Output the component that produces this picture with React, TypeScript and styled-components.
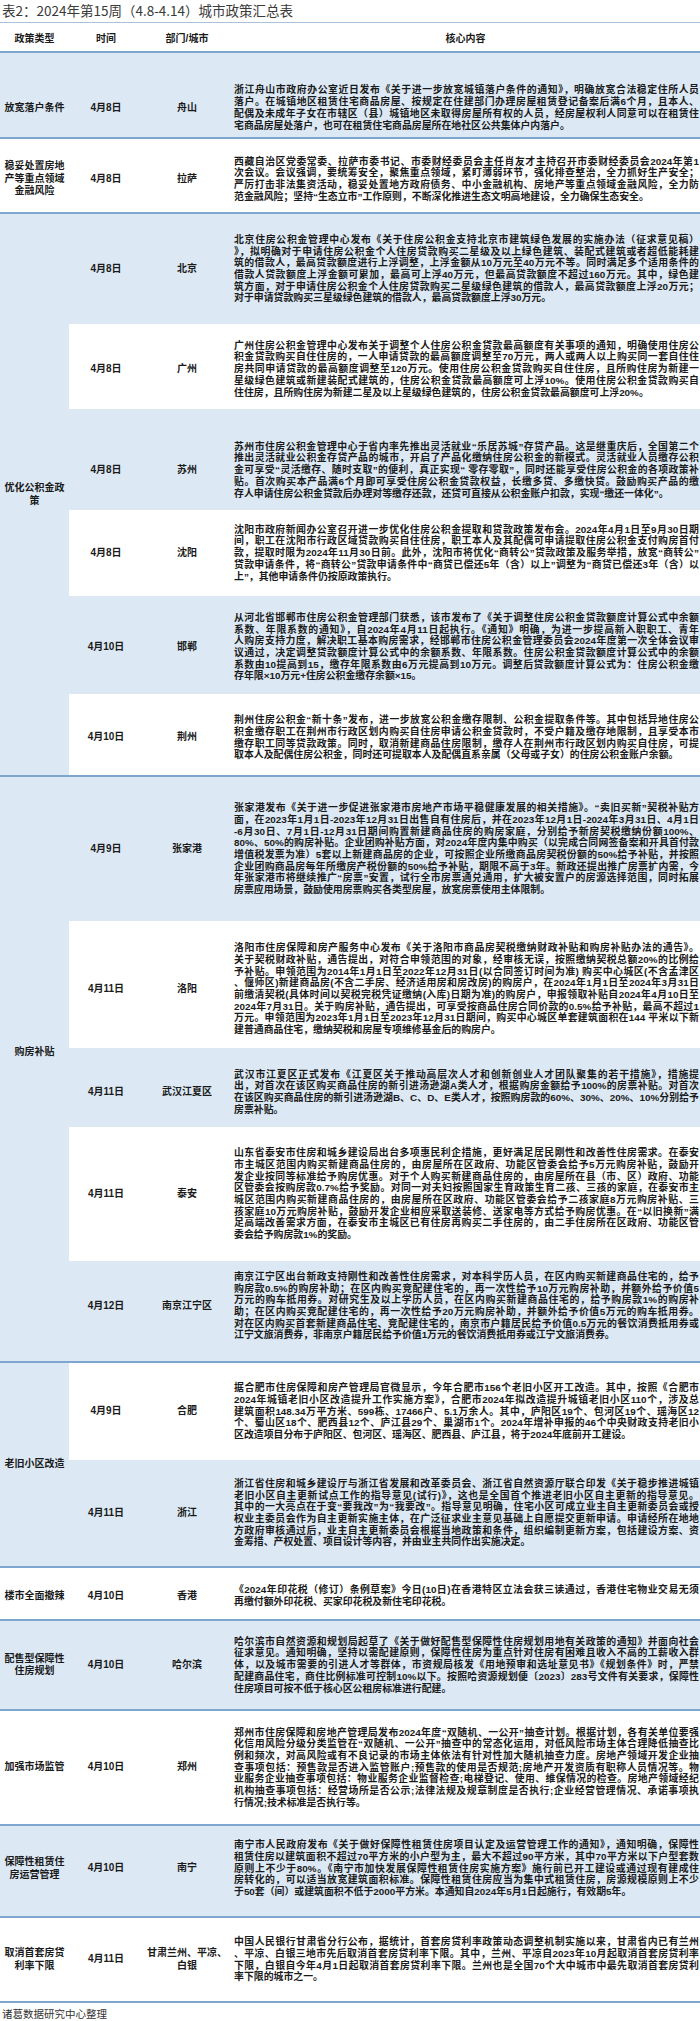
import styled, { createGlobalStyle } from "styled-components";

const GlobalStyle = createGlobalStyle`
  html, body {
    margin: 0;
    padding: 0;
    background: #fff;
  }
  body {
    font-family: "Liberation Sans", "Noto Sans CJK SC", sans-serif;
    color: #1a1a1a;
  }
`;

type PolicyRow = {
  date: string;
  city: string[];
  h: number;
  dy: number;
  lines: string[];
};

type PolicyGroup = {
  type: string[];
  dy?: number;
  rows: PolicyRow[];
};

const groups: PolicyGroup[] = [
  {
    type: ["放宽落户条件"],
    rows: [
      {
        date: "4月8日",
        city: ["舟山"],
        h: 86,
        dy: 12.8,
        lines: [
          "浙江舟山市政府办公室近日发布《关于进一步放宽城镇落户条件的通知》，明确放宽合法稳定住所人员",
          "落户。在城镇地区租赁住宅商品房屋、按规定在住建部门办理房屋租赁登记备案后满6个月，且本人、",
          "配偶及未成年子女在市辖区（县）城镇地区未取得房屋所有权的人员，经房屋权利人同意可以在租赁住",
          "宅商品房屋处落户，也可在租赁住宅商品房屋所在地社区公共集体户内落户。",
        ],
      },
    ],
  },
  {
    type: ["稳妥处置房地", "产等重点领域", "金融风险"],
    rows: [
      {
        date: "4月8日",
        city: ["拉萨"],
        h: 75,
        dy: 3.5,
        lines: [
          "西藏自治区党委常委、拉萨市委书记、市委财经委员会主任肖友才主持召开市委财经委员会2024年第1",
          "次会议。会议强调，要统筹安全，聚焦重点领域，紧盯薄弱环节，强化排查整治，全力抓好生产安全；",
          "严厉打击非法集资活动，稳妥处置地方政府债务、中小金融机构、房地产等重点领域金融风险，全力防",
          "范金融风险；坚持“生态立市”工作原则，不断深化推进生态文明高地建设，全力确保生态安全。",
        ],
      },
    ],
  },
  {
    type: ["优化公积金政", "策"],
    rows: [
      {
        date: "4月8日",
        city: ["北京"],
        h: 110,
        dy: 0,
        lines: [
          "北京住房公积金管理中心发布《关于住房公积金支持北京市建筑绿色发展的实施办法（征求意见稿）",
          "》，拟明确对于申请住房公积金个人住房贷款购买二星级及以上绿色建筑、装配式建筑或者超低能耗建",
          "筑的借款人，最高贷款额度进行上浮调整，上浮金额从10万元至40万元不等。同时满足多个适用条件的",
          "借款人贷款额度上浮金额可累加，最高可上浮40万元，但最高贷款额度不超过160万元。其中，绿色建",
          "筑方面，对于申请住房公积金个人住房贷款购买二星级绿色建筑的借款人，最高贷款额度上浮20万元；",
          "对于申请贷款购买三星级绿色建筑的借款人，最高贷款额度上浮30万元。",
        ],
      },
      {
        date: "4月8日",
        city: ["广州"],
        h: 85,
        dy: 2.5,
        lines: [
          "广州住房公积金管理中心发布关于调整个人住房公积金贷款最高额度有关事项的通知，明确使用住房公",
          "积金贷款购买自住住房的，一人申请贷款的最高额度调整至70万元，两人或两人以上购买同一套自住住",
          "房共同申请贷款的最高额度调整至120万元。使用住房公积金贷款购买自住住房，且所购住房为新建一",
          "星级绿色建筑或新建装配式建筑的，住房公积金贷款最高额度可上浮10%。使用住房公积金贷款购买自",
          "住住房，且所购住房为新建二星及以上星级绿色建筑的，住房公积金贷款最高额度可上浮20%。",
        ],
      },
      {
        date: "4月8日",
        city: ["苏州"],
        h: 101,
        dy: 10.5,
        lines: [
          "苏州市住房公积金管理中心于省内率先推出灵活就业“乐居苏城”存贷产品。这是继重庆后，全国第二个",
          "推出灵活就业公积金存贷产品的城市，开启了产品化缴纳住房公积金的新模式。灵活就业人员缴存公积",
          "金可享受“灵活缴存、随时支取”的便利，真正实现“ 零存零取”，同时还能享受住房公积金的各项政策补",
          "贴。首次购买本产品满6个月即可享受住房公积金贷款权益，长缴多贷、多缴快贷。鼓励购买产品的缴",
          "存人申请住房公积金贷款后办理对等缴存还款，还贷可直接从公积金账户扣款，实现“缴还一体化”。",
        ],
      },
      {
        date: "4月8日",
        city: ["沈阳"],
        h: 86,
        dy: 0,
        lines: [
          "沈阳市政府新闻办公室召开进一步优化住房公积金提取和贷款政策发布会。2024年4月1日至9月30日期",
          "间，职工在沈阳市行政区域贷款购买自住住房，职工本人及其配偶可申请提取住房公积金支付购房首付",
          "款，提取时限为2024年11月30日前。此外，沈阳市将优化“商转公”贷款政策及服务举措，放宽“商转公”",
          "贷款申请条件，将“商转公”贷款申请条件中“商贷已偿还5年（含）以上”调整为“商贷已偿还3年（含）以",
          "上”，其他申请条件仍按原政策执行。",
        ],
      },
      {
        date: "4月10日",
        city: ["邯郸"],
        h: 98,
        dy: 2,
        lines: [
          "从河北省邯郸市住房公积金管理部门获悉，该市发布了《关于调整住房公积金贷款额度计算公式中余额",
          "系数、年限系数的通知》，自2024年4月11日起执行。《通知》明确，为进一步提高新入职职工、青年",
          "人购房支持力度，解决职工基本购房需求，经邯郸市住房公积金管理委员会2024年度第一次全体会议审",
          "议通过，决定调整贷款额度计算公式中的余额系数、年限系数。住房公积金贷款额度计算公式中的余额",
          "系数由10提高到15，缴存年限系数由6万元提高到10万元。调整后贷款额度计算公式为：住房公积金缴",
          "存年限×10万元+住房公积金缴存余额×15。",
        ],
      },
      {
        date: "4月10日",
        city: ["荆州"],
        h: 83,
        dy: 3,
        lines: [
          "荆州住房公积金“新十条”发布，进一步放宽公积金缴存限制、公积金提取条件等。其中包括异地住房公",
          "积金缴存职工在荆州市行政区划内购买自住房申请公积金贷款时，不受户籍及缴存地限制，且享受本市",
          "缴存职工同等贷款政策。同时，取消新建商品住房限制，缴存人在荆州市行政区划内购买自住房，可提",
          "取本人及配偶住房公积金，同时还可提取本人及配偶直系亲属（父母或子女）的住房公积金账户余额。",
        ],
      },
    ],
  },
  {
    type: ["购房补贴"],
    dy: -17,
    rows: [
      {
        date: "4月9日",
        city: ["张家港"],
        h: 144,
        dy: 0,
        lines: [
          "张家港发布《关于进一步促进张家港市房地产市场平稳健康发展的相关措施》。“卖旧买新”契税补贴方",
          "面，在2023年1月1日-2023年12月31日出售自有住房后，并在2023年12月1日-2024年3月31日、4月1日",
          "-6月30日、7月1日-12月31日期间购置新建商品住房的购房家庭，分别给予新房契税缴纳份额100%、",
          "80%、50%的购房补贴。企业团购补贴方面，对2024年度内集中购买（以完成合同网签备案和开具首付款",
          "增值税发票为准）5套以上新建商品房的企业，可按照企业所缴商品房契税份额的50%给予补贴，并按照",
          "企业团购商品房每年所缴房产税份额的50%给予补贴，期限不高于3年。新政还提出推广房票扩内需，今",
          "年张家港市将继续推广“房票”安置，试行全市房票通兑通用，扩大被安置户的房源选择范围，同时拓展",
          "房票应用场景，鼓励使用房票购买各类型房屋，放宽房票使用主体限制。",
        ],
      },
      {
        date: "4月11日",
        city: ["洛阳"],
        h: 127,
        dy: 4.5,
        lines: [
          "洛阳市住房保障和房产服务中心发布《关于洛阳市商品房契税缴纳财政补贴和购房补贴办法的通告》。",
          "关于契税财政补贴，通告提出，对符合申领范围的对象，经审核无误，按照缴纳契税总额20%的比例给",
          "予补贴。申领范围为2014年1月1日至2022年12月31日(以合同签订时间为准) 购买中心城区(不含孟津区",
          "、偃师区)新建商品房(不含二手房、经济适用房和房改房)的购房户，在2024年1月1日至2024年3月31日",
          "前缴清契税(具体时间以契税完税凭证缴纳(入库)日期为准)的购房户，申报领取补贴自2024年4月10日至",
          "2024年7月31日。关于购房补贴，通告提出，可享受按商品住房合同价款的0.5%给予补贴，最高不超过1",
          "万元。申领范围为2023年1月1日至2023年12月31日期间，购买中心城区单套建筑面积在144 平米以下新",
          "建普通商品住宅，缴纳契税和房屋专项维修基金后的购房户。",
        ],
      },
      {
        date: "4月11日",
        city: ["武汉江夏区"],
        h: 79,
        dy: 4.5,
        lines: [
          "武汉市江夏区正式发布《江夏区关于推动高层次人才和创新创业人才团队聚集的若干措施》，措施提",
          "出，对首次在该区购买商品住房的新引进汤逊湖A类人才，根据购房金额给予100%的房票补贴。对首次",
          "在该区购买商品住房的新引进汤逊湖B、C、D、E类人才，按照购房款的60%、30%、20%、10%分别给予",
          "房票补贴。",
        ],
      },
      {
        date: "4月11日",
        city: ["泰安"],
        h: 134,
        dy: 0,
        lines: [
          "山东省泰安市住房和城乡建设局出台多项惠民利企措施，更好满足居民刚性和改善性住房需求。在泰安",
          "市主城区范围内购买新建商品住房的，由房屋所在区政府、功能区管委会给予5万元购房补贴，鼓励开",
          "发企业按同等标准给予购房优惠。对于个人购买新建商品住房的，由房屋所在县（市、区）政府、功能",
          "区管委会按购房款0.7%给予奖励。对同一对夫妇按照国家生育政策生育二孩、三孩的家庭，在泰安市主",
          "城区范围内购买新建商品住房的，由房屋所在区政府、功能区管委会给予二孩家庭8万元购房补贴、三",
          "孩家庭10万元购房补贴，鼓励开发企业相应采取送装修、送家电等方式给予购房优惠。在“以旧换新”满",
          "足高端改善需求方面，在泰安市主城区已有住房再购买二手住房的，由二手住房所在区政府、功能区管",
          "委会给予购房款1%的奖励。",
        ],
      },
      {
        date: "4月12日",
        city: ["南京江宁区"],
        h: 102,
        dy: -5,
        lines: [
          "南京江宁区出台新政支持刚性和改善性住房需求，对本科学历人员，在区内购买新建商品住宅的，给予",
          "购房款0.5%的购房补助；在区内购买竞配建住宅的，再一次性给予10万元购房补助，并额外给予价值5",
          "万元的购车抵用券。对研究生及以上学历人员，在区内购买新建商品住宅的，给予购房款1%的购房补",
          "助；在区内购买竞配建住宅的，再一次性给予20万元购房补助，并额外给予价值5万元的购车抵用券。",
          "对在区内购买首套新建商品住宅、竞配建住宅的，南京市户籍居民给予价值0.5万元的餐饮消费抵用券或",
          "江宁文旅消费券，非南京户籍居民给予价值1万元的餐饮消费抵用券或江宁文旅消费券。",
        ],
      },
    ],
  },
  {
    type: ["老旧小区改造"],
    rows: [
      {
        date: "4月9日",
        city: ["合肥"],
        h: 97,
        dy: 0,
        lines: [
          "据合肥市住房保障和房产管理局官微显示，今年合肥市156个老旧小区开工改造。其中，按照《合肥市",
          "2024年城镇老旧小区改造提升工作实施方案》，合肥市2024年拟改造提升城镇老旧小区110个，涉及总",
          "建筑面积148.34万平方米、599栋、17466户、5.1万余人。其中，庐阳区19个、包河区19个、瑶海区12",
          "个、蜀山区18个、肥西县12个、庐江县29个、巢湖市1个。2024年增补申报的46个中央财政支持老旧小",
          "区改造项目分布于庐阳区、包河区、瑶海区、肥西县、庐江县，将于2024年底前开工建设。",
        ],
      },
      {
        date: "4月11日",
        city: ["浙江"],
        h: 108,
        dy: 0,
        lines: [
          "浙江省住房和城乡建设厅与浙江省发展和改革委员会、浙江省自然资源厅联合印发《关于稳步推进城镇",
          "老旧小区自主更新试点工作的指导意见(试行)》，这也是全国首个推进老旧小区自主更新的指导意见。",
          "其中的一大亮点在于变“要我改”为“我要改”。指导意见明确，住宅小区可成立业主自主更新委员会或授",
          "权业主委员会作为自主更新实施主体，在广泛征求业主意见基础上自愿提交更新申请。申请经所在地地",
          "方政府审核通过后，业主自主更新委员会根据当地政策和条件，组织编制更新方案，包括建设方案、资",
          "金筹措、产权处置、项目设计等内容，并由业主共同作出实施决定。",
        ],
      },
    ],
  },
  {
    type: ["楼市全面撤辣"],
    rows: [
      {
        date: "4月10日",
        city: ["香港"],
        h: 53,
        dy: 2.5,
        lines: [
          "《2024年印花税（修订）条例草案》今日(10日)在香港特区立法会获三读通过，香港住宅物业交易无须",
          "再缴付额外印花税、买家印花税及新住宅印花税。",
        ],
      },
    ],
  },
  {
    type: ["配售型保障性", "住房规划"],
    rows: [
      {
        date: "4月10日",
        city: ["哈尔滨"],
        h: 90,
        dy: 0,
        lines: [
          "哈尔滨市自然资源和规划局起草了《关于做好配售型保障性住房规划用地有关政策的通知》并面向社会",
          "征求意见。通知明确，坚持以需配建原则，保障性住房为重点针对住房有困难且收入不高的工薪收入群",
          "体，以及城市需要的引进人才等群体，市资规局核发《用地预审和选址意见书》《规划条件》时，严禁",
          "配建商品住宅，商住比例标准可控制10%以下。按照哈资源规划便〔2023〕283号文件有关要求，保障性",
          "住房项目可按不低于核心区公租房标准进行配建。",
        ],
      },
    ],
  },
  {
    type: ["加强市场监管"],
    rows: [
      {
        date: "4月10日",
        city: ["郑州"],
        h: 115,
        dy: 0,
        lines: [
          "郑州市住房保障和房地产管理局发布2024年度“双随机、一公开”抽查计划。根据计划，各有关单位要强",
          "化信用风险分级分类监管在“双随机、一公开”抽查中的常态化运用，对低风险市场主体合理降低抽查比",
          "例和频次，对高风险或有不良记录的市场主体依法有针对性加大随机抽查力度。房地产领域开发企业抽",
          "查事项包括：预售款是否进入监管账户;预售款的使用是否规范;房地产开发资质有职称人员情况等。物",
          "业服务企业抽查事项包括：物业服务企业监督检查;电梯登记、使用、维保情况的检查。房地产领域经纪",
          "机构抽查事项包括：经营场所是否公示;法律法规及规章制度是否执行;企业经营管理情况、承诺事项执",
          "行情况;技术标准是否执行等。",
        ],
      },
    ],
  },
  {
    type: ["保障性租赁住", "房运营管理"],
    rows: [
      {
        date: "4月10日",
        city: ["南宁"],
        h: 92,
        dy: -2.5,
        lines: [
          "南宁市人民政府发布《关于做好保障性租赁住房项目认定及运营管理工作的通知》，通知明确，保障性",
          "租赁住房以建筑面积不超过70平方米的小户型为主，最大不超过90平方米，其中70平方米以下户型套数",
          "原则上不少于80%。《南宁市加快发展保障性租赁住房实施方案》施行前已开工建设或通过现有建成住",
          "房转化的，可以适当放宽建筑面积标准。保障性租赁住房应当为集中式租赁住房，房源规模原则上不少",
          "于50套（间）或建筑面积不低于2000平方米。本通知自2024年5月1日起施行，有效期5年。",
        ],
      },
    ],
  },
  {
    type: ["取消首套房贷", "利率下限"],
    rows: [
      {
        date: "4月11日",
        city: ["甘肃兰州、平凉、", "白银"],
        h: 85,
        dy: 0,
        lines: [
          "中国人民银行甘肃省分行公布，据统计，首套房贷利率政策动态调整机制实施以来，甘肃省内已有兰州",
          "、平凉、白银三地市先后取消首套房贷利率下限。其中，兰州、平凉自2023年10月起取消首套房贷利率",
          "下限，白银自今年4月1日起取消首套房贷利率下限。兰州也是全国70个大中城市中最先取消首套房贷利",
          "率下限的城市之一。",
        ],
      },
    ],
  },
];

const BLUE = "#dce9f5";
const RULE = "#7ea6cf";

const Page = styled.div`
  width: 700px;
  background: #fff;
`;

const Title = styled.div`
  height: 22px;
  line-height: 20px;
  padding-left: 2px;
  font-family: "Noto Sans CJK SC", sans-serif;
  font-size: 13.5px;
  color: #3a3a3a;
  white-space: nowrap;
`;

const Table = styled.table`
  width: 700px;
  table-layout: fixed;
  border-collapse: separate;
  border-spacing: 0;
`;

const HeadCell = styled.th`
  height: 28px;
  padding: 0;
  border-top: 1px solid #a9c2dc;
  border-bottom: 2px solid ${RULE};
  font-size: 10px;
  font-weight: 700;
  text-align: center;
  color: #1a1a1a;
`;

const BodyRow = styled.tr<{ $h: number }>`
  height: ${(p) => p.$h}px;
`;

const Cell = styled.td<{ $blue: boolean; $dy: number; $end: boolean; $left?: boolean }>`
  padding: ${(p) => Math.max(0, p.$dy * 2)}px ${(p) => (p.$left ? "1px" : "0")}
    ${(p) => Math.max(0, -p.$dy * 2)}px ${(p) => (p.$left ? "3px" : "0")};
  background: ${(p) => (p.$blue ? BLUE : "#fff")};
  border-bottom: ${(p) => (p.$end ? `2px solid ${RULE}` : "none")};
  vertical-align: middle;
  text-align: ${(p) => (p.$left ? "left" : "center")};
  font-size: 10px;
  font-weight: 700;
  line-height: 12.4px;
  color: #1a1a1a;
`;

const Line = styled.span<{ $last: boolean }>`
  display: block;
  white-space: nowrap;
  font-size: 9.9px;
  line-height: 11.7px;
  text-align: ${(p) => (p.$last ? "left" : "justify")};
  text-align-last: ${(p) => (p.$last ? "left" : "justify")};
`;

const Footer = styled.div`
  height: 21px;
  line-height: 22px;
  padding-left: 2px;
  font-family: "Noto Sans CJK SC", sans-serif;
  font-size: 10.5px;
  color: #333;
`;

function Stack({ items }: { items: string[] }) {
  return (
    <>
      {items.map((t, i) => (
        <span key={i}>
          {t}
          {i < items.length - 1 && <br />}
        </span>
      ))}
    </>
  );
}

export default function App() {
  let n = 0;
  return (
    <Page>
      <GlobalStyle />
      <Title>表2：2024年第15周（4.8-4.14）城市政策汇总表</Title>
      <Table>
        <colgroup>
          <col style={{ width: 69 }} />
          <col style={{ width: 74 }} />
          <col style={{ width: 88 }} />
          <col style={{ width: 469 }} />
        </colgroup>
        <thead>
          <tr>
            <HeadCell>政策类型</HeadCell>
            <HeadCell>时间</HeadCell>
            <HeadCell>部门/城市</HeadCell>
            <HeadCell>核心内容</HeadCell>
          </tr>
        </thead>
        <tbody>
          {groups.map((g) =>
            g.rows.map((r, i) => {
              const blue = n++ % 2 === 0;
              const end = i === g.rows.length - 1;
              const multi = g.rows.length > 1;
              return (
                <BodyRow key={`${g.type[0]}-${i}`} $h={r.h}>
                  {i === 0 && (
                    <Cell
                      rowSpan={g.rows.length}
                      $blue={multi ? true : blue}
                      $dy={multi ? g.dy ?? 0 : r.dy}
                      $end
                    >
                      <Stack items={g.type} />
                    </Cell>
                  )}
                  <Cell $blue={blue} $dy={r.dy} $end={end}>
                    {r.date}
                  </Cell>
                  <Cell $blue={blue} $dy={r.dy} $end={end}>
                    <Stack items={r.city} />
                  </Cell>
                  <Cell $blue={blue} $dy={r.dy} $end={end} $left>
                    {r.lines.map((l, k) => (
                      <Line key={k} $last={k === r.lines.length - 1}>
                        {l}
                      </Line>
                    ))}
                  </Cell>
                </BodyRow>
              );
            })
          )}
        </tbody>
      </Table>
      <Footer>诸葛数据研究中心整理</Footer>
    </Page>
  );
}
